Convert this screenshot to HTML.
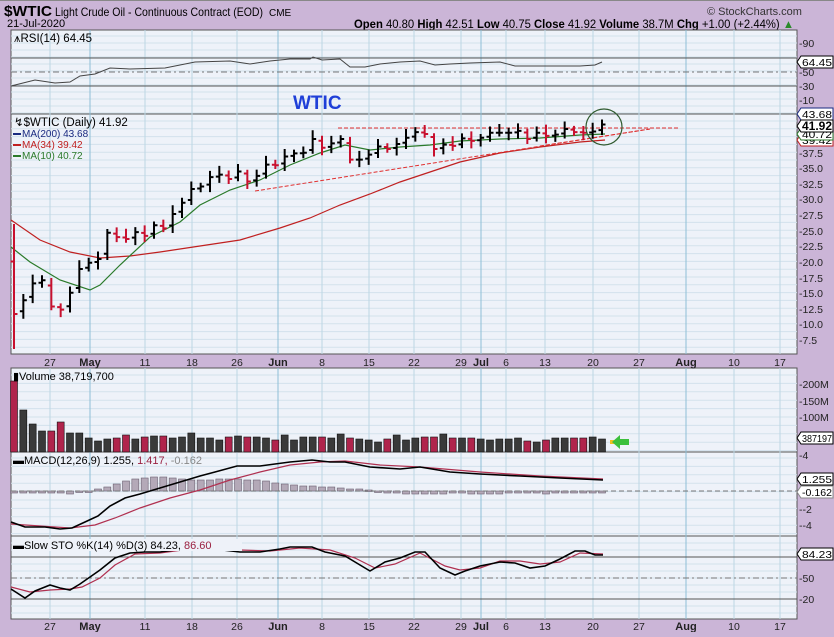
<!DOCTYPE html>
<html><head><meta charset="utf-8"><style>
html,body{margin:0;padding:0;background:#cbb5d7;}
body{width:834px;height:632px;overflow:hidden;font-family:"Liberation Sans",sans-serif;}
svg text{font-family:"Liberation Sans",sans-serif;}
</style></head><body>
<svg id="s" width="834" height="632" xmlns="http://www.w3.org/2000/svg">
<rect width="834" height="632" fill="#cbb5d7"/>
<rect x="0" y="0" width="834" height="1" fill="#888"/>
<text x="4" y="16" font-size="15" font-weight="bold" fill="#000" textLength="48" lengthAdjust="spacingAndGlyphs">$WTIC</text>
<text x="55" y="16" font-size="12" fill="#000" textLength="208" lengthAdjust="spacingAndGlyphs">Light Crude Oil - Continuous Contract (EOD)</text>
<text x="269" y="16" font-size="10" fill="#000">CME</text>
<text x="7" y="27" font-size="11" fill="#000">21-Jul-2020</text>
<text x="707" y="15" font-size="11" fill="#333">© StockCharts.com</text>
<text x="354" y="28" font-size="11.5" fill="#000" textLength="440" lengthAdjust="spacingAndGlyphs"><tspan font-weight="bold">Open</tspan> 40.80  <tspan font-weight="bold">High</tspan> 42.51  <tspan font-weight="bold">Low</tspan> 40.75  <tspan font-weight="bold">Close</tspan> 41.92  <tspan font-weight="bold">Volume</tspan> 38.7M  <tspan font-weight="bold">Chg</tspan> +1.00 (+2.44%) <tspan fill="#2a8a2a">▲</tspan></text>
<g id="g"></g>
</svg>
<script>
const NS="http://www.w3.org/2000/svg",G=document.getElementById('g');
function el(t,a,txt){const e=document.createElementNS(NS,t);for(const k in a)e.setAttribute(k,a[k]);if(txt!==undefined)e.textContent=txt;G.appendChild(e);return e;}
const L=11,R=797;
const panels=[[30,114],[114,354],[368,452],[452,536],[536,619]];
panels.forEach(p=>el('rect',{x:L,y:p[0],width:R-L,height:p[1]-p[0],fill:'#eef2f9',stroke:'#555','stroke-width':1}));
const wk=[[50,'27'],[90,'May'],[145,'11'],[192,'18'],[237,'26'],[278,'Jun'],[322,'8'],[369,'15'],[414,'22'],[461,'29'],[481,'Jul'],[506,'6'],[545,'13'],[593,'20'],[639,'27'],[686,'Aug'],[734,'10'],[780,'17']];
function hg(y0,y1,step){for(let y=y0;y<y1;y+=step)el('line',{x1:L,x2:R,y1:y,y2:y,stroke:'#d3e1ec','stroke-width':1});}
hg(36,114,7);hg(121,354,7.8);hg(375,452,8.4);hg(458,536,8.4);hg(543,619,7);
panels.forEach(p=>{wk.forEach(w=>{const x=w[0];const big=isNaN(+w[1]);el('line',{x1:x,x2:x,y1:p[0],y2:p[1],stroke:big?'#8dbfd6':'#bcd7e4','stroke-width':1});});});
[[354,366],[619,630]].forEach(a=>wk.forEach(w=>{const big=isNaN(+w[1]);el('text',{x:w[0],y:a[1],'font-size':big?'11':'10.5','font-weight':big?'bold':'normal','text-anchor':'middle',fill:'#222'},w[1]);}));
[[58,'#555','none'],[72,'#777','6 3 2 3'],[86,'#555','none']].forEach(a=>el('line',{x1:L,x2:R,y1:a[0],y2:a[0],stroke:a[1],'stroke-dasharray':a[2]}));
const pl=(pts,c,w)=>el('polyline',{points:pts,fill:'none',stroke:c,'stroke-width':w||1});
pl("11,86 35,80 55,83 70,82 80,76 95,74 110,68 130,69 165,68 175,66 195,62 230,61 250,64 270,61 290,59 310,59 313,57 322,60 340,59 350,67 365,67 380,64 400,62 420,61 435,65 450,64 470,63 500,62 515,66 535,66 550,66 580,66 595,65 602,62",'#444');
el('text',{x:14,y:42,'font-size':'11.5',fill:'#000','font-family':'Liberation Mono'},'⩚RSI(14) 64.45');
[[43,'90'],[72,'50'],[86,'30'],[100,'10']].forEach(a=>el('text',{x:799,y:a[0]+4,'font-size':'10.5',fill:'#222'},'-'+a[1]));
el('text',{x:293,y:109,'font-size':'19','font-weight':'bold',fill:'#1f3fd8'},'WTIC');
const py=p=>199-(p-30)*6.25;
[[153,'37.5'],[168,'35.0'],[184,'32.5'],[199,'30.0'],[215,'27.5'],[231,'25.0'],[246,'22.5'],[262,'20.0'],[278,'17.5'],[293,'15.0'],[309,'12.5'],[324,'10.0'],[340,'7.5']].forEach(a=>el('text',{x:799,y:a[0]+4,'font-size':'10.5',fill:'#222'},'-'+a[1]));
const C=[11.6,13.8,16.5,17,12.8,12.3,15,18.8,19.8,20.4,24.6,23.9,23.6,24.7,24.1,25.8,25.3,27.6,29.4,31.6,32.0,33.5,33.9,33.2,34.4,32.8,33.7,35.5,35.4,36.8,37.3,37.4,39.6,38.2,38.9,39.6,36.3,36.3,37.1,38.4,38.0,38.8,39.8,40.7,40.4,38.0,38.7,38.5,39.7,39.3,39.8,40.6,40.6,40.6,40.9,39.6,40.6,40.1,40.3,41.2,40.7,40.6,40.8,41.92];
const xi=i=>14+i*(588/63);
pl("11,220 40,240 70,252 100,258 130,256 160,252 200,246 240,240 280,228 310,218 340,205 370,194 400,182 430,172 460,162 500,153 540,147 580,142 605,140",'#c02020',1.2);
pl("11,247 30,262 60,280 90,290 100,285 120,265 150,237 180,222 200,205 230,190 260,180 290,165 320,153 345,145 370,150 400,147 430,145 460,141 500,139 540,138 580,135 605,134",'#2a7a2a',1.2);
el('line',{x1:338,x2:680,y1:128,y2:128,stroke:'#e03030','stroke-dasharray':'4 2'});
el('line',{x1:255,x2:650,y1:191,y2:129,stroke:'#e03030','stroke-dasharray':'4 2'});
el('line',{x1:540,x2:650,y1:146,y2:129,stroke:'#e03030','stroke-dasharray':'4 2'});
const vols=[71,42,28,21,21,30,19,19,14,11,13,14,17,13,15,16,16,14,15,19,14,14,12,15,16,15,15,14,12,17,12,15,15,15,14,18,14,13,12,10,13,17,12,14,15,15,18,14,14,14,13,12,13,13,14,11,10,12,14,14,14,14,15,13];
const mh=[-2,-2,-2,-2,-2,-2,-3,-1,0,2,4,7,10,12,13,14,14,13,12,11,11,11,12,12,12,11,11,10,8,7,6,5,5,4,4,3,2,2,1,0,-2,-2,-3,-3,-3,-3,-3,-2,-2,-3,-3,-3,-3,-2,-2,-2,-2,-3,-2,-2,-2,-2,-2,-2];
C.forEach((c,i)=>{const x=xi(i);const prev=i?C[i-1]:14;const o=i?prev+(c-prev)*0.2:20;let h=Math.max(c,o)+0.6+((i*7)%5)*0.2,l=Math.min(c,o)-0.6-((i*3)%4)*0.2;
 if(i==0){h=26;l=6;}
 const red=c<prev;const col=red?'#c8102e':'#000';
 el('line',{x1:x,x2:x,y1:py(h),y2:py(l),stroke:col,'stroke-width':2});
 el('line',{x1:x-3.5,x2:x,y1:py(o),y2:py(o),stroke:col,'stroke-width':2});
 el('line',{x1:x,x2:x+3.5,y1:py(c),y2:py(c),stroke:col,'stroke-width':2});
 const vh=vols[i]||14;el('rect',{x:x-3.5,y:452-vh,width:7,height:vh,fill:red?'#b0244c':'#3a3a3a',stroke:'#111','stroke-width':0.6});
 const m=mh[i]||0;el('rect',{x:x-3.5,y:m>0?491-m:491,width:7,height:Math.max(Math.abs(m),1.5),fill:'#b4a9b8',stroke:'#6a6070','stroke-width':0.6});
});
el('circle',{cx:604,cy:127,r:18,fill:'none',stroke:'#2f5a2f','stroke-width':1.2});
el('text',{x:14,y:126,'font-size':'11.5',fill:'#000','font-family':'Liberation Mono'},'↯$WTIC (Daily) 41.92');
[['MA(200) 43.68','#1a2a80',137],['MA(34) 39.42','#c02020',148],['MA(10) 40.72','#2a7a2a',159]].forEach(a=>{el('rect',{x:13,y:a[2]-4,width:8,height:2,fill:a[1]});el('text',{x:22,y:a[2],'font-size':'10',fill:a[1]},a[0]);});
function box(y,t,c,b){el('path',{d:`M${797} ${y} l4 -6 h32 v12 h-32 z`,fill:'#fff',stroke:c||'#000'});el('text',{x:802,y:y+4,'font-size':b?'12':'10.5','font-weight':b?'bold':'normal',fill:'#000',textLength:30,lengthAdjust:'spacingAndGlyphs'},t);}
box(62,'64.45');box(114,'43.68','#1a2a80');box(140,'39.42','#c02020');box(134,'40.72','#2a7a2a');box(126,'41.92','#000',1);
el('text',{x:13,y:380,'font-size':'11',fill:'#000','font-family':'Liberation Mono'},'▮Volume 38,719,700');
[[384,'200M'],[401,'150M'],[417,'100M']].forEach(a=>el('text',{x:799,y:a[0]+4,'font-size':'10.5',fill:'#222'},'-'+a[1]));
box(438,'387197');
el('rect',{x:610,y:440,width:4,height:4,fill:'#f0c020'});
el('path',{d:'M612 442 l8 -7 v4 h9 v6 h-9 v4 z',fill:'#3cc03c'});
el('line',{x1:L,x2:R,y1:491,y2:491,stroke:'#777','stroke-dasharray':'5 3'});
pl("11,524 40,526 70,528 95,525 115,518 140,508 170,498 200,490 230,480 260,472 290,465 320,462 345,461 380,465 420,467 480,472 540,476 603,479",'#b03050',1.2);
pl("11,522 25,527 45,527 60,529 72,528 85,522 98,516 110,506 125,498 140,494 160,488 180,482 200,476 215,472 237,466 260,466 290,462 312,460 330,462 345,462 370,467 400,469 420,467 450,472 480,474 520,476 560,478 603,480",'#000',1.6);
const mt=el('text',{x:13,y:464,'font-size':'11',fill:'#000','font-family':'Liberation Mono'},'▬MACD(12,26,9) 1.255, ');
const t1=document.createElementNS(NS,'tspan');t1.textContent='1.417, ';t1.setAttribute('fill','#9a2040');mt.appendChild(t1);
const ts=document.createElementNS(NS,'tspan');ts.textContent='-0.162';ts.setAttribute('fill','#888');mt.appendChild(ts);
[[455,'4'],[509,'-2'],[525,'-4']].forEach(a=>el('text',{x:799,y:a[0]+4,'font-size':'10.5',fill:'#222'},'-'+a[1]));
box(479,'1.255');box(492,'-0.162','#888');
[[557,'#555','none'],[578,'#777','6 3 2 3'],[599,'#555','none']].forEach(a=>el('line',{x1:L,x2:R,y1:a[0],y2:a[0],stroke:a[1],'stroke-dasharray':a[2]}));
pl("11,587 30,592 50,590 70,589 82,587 100,578 115,565 135,554 160,553 190,549 240,550 270,551 300,548 330,550 355,558 375,568 395,564 420,553 445,566 460,570 480,568 500,561 520,561 540,564 560,562 580,553 603,554",'#b03050',1.2);
pl("11,589 25,598 35,591 50,585 60,588 70,590 80,584 90,577 100,570 115,558 130,553 145,552 160,552 175,550 190,549 205,548 240,552 260,552 280,549 290,547 312,547 325,552 345,556 370,571 385,562 400,558 415,552 425,552 440,568 455,575 465,571 480,566 500,562 515,563 530,568 545,566 560,559 575,551 585,551 595,555 603,555",'#000',1.6);
el('rect',{x:12,y:539,width:230,height:12,fill:'#eef2f9'});
const st=el('text',{x:13,y:549,'font-size':'11',fill:'#000','font-family':'Liberation Mono'},'▬Slow STO %K(14) %D(3) 84.23, ');
const t2=document.createElementNS(NS,'tspan');t2.textContent='86.60';t2.setAttribute('fill','#9a2040');st.appendChild(t2);
[[578,'50'],[599,'20']].forEach(a=>el('text',{x:799,y:a[0]+4,'font-size':'10.5',fill:'#222'},'-'+a[1]));
box(554,'84.23');
</script>
</body></html>
